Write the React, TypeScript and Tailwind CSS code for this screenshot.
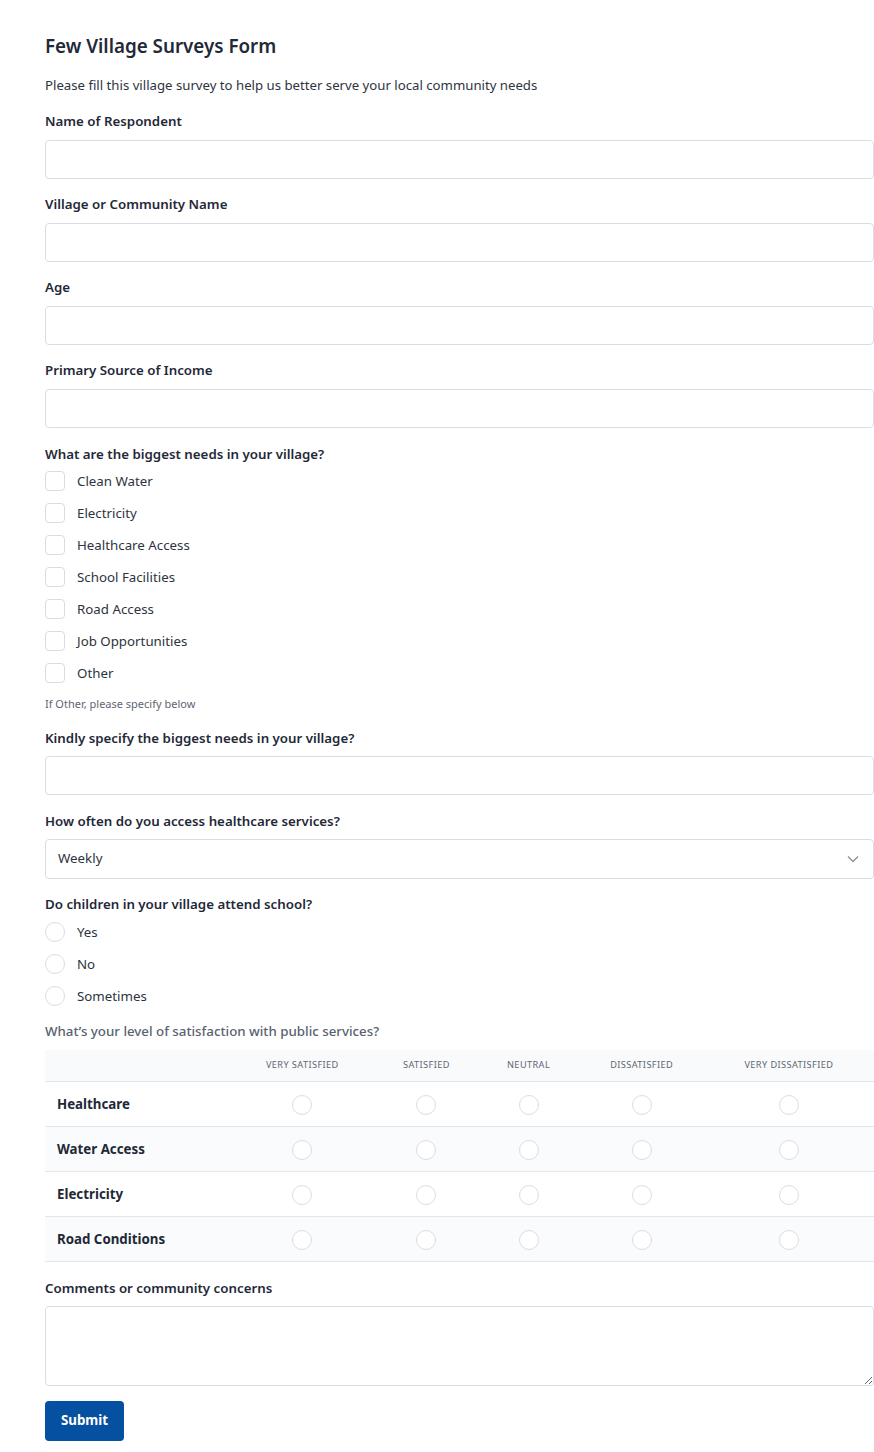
import React from "react";

const font = { fontFamily: '"Noto Sans", "Open Sans", sans-serif' };

function Label({ children }: { children: React.ReactNode }) {
  return <div className="text-[13.3px] leading-[20px] font-semibold text-[#1f2937]">{children}</div>;
}

function TextField({ label, gap = "mt-[9px]" }: { label: string; gap?: string }) {
  return (
    <div className="flex flex-col">
      <Label>{label}</Label>
      <input className={`${gap} block h-[39px] w-full rounded-[4px] border border-[#d9dde3] bg-white px-3 text-[14px] outline-none`} />
    </div>
  );
}

function Check({ label }: { label: string }) {
  return (
    <label className="flex items-center gap-[12px] h-[20px]">
      <span className="block h-[20px] w-[20px] rounded-[4px] border border-[#d9dde3] bg-white" />
      <span className="text-[13.3px] leading-[20px] text-[#2d3440]">{label}</span>
    </label>
  );
}

function Radio({ label }: { label?: string }) {
  return (
    <label className="flex items-center gap-[12px] h-[20px]">
      <span className="block h-[20px] w-[20px] rounded-full border border-[#d9dde3] bg-white" />
      {label && <span className="text-[13.3px] leading-[20px] text-[#2d3440]">{label}</span>}
    </label>
  );
}

function Circle() {
  return <span className="block h-[20px] w-[20px] rounded-full border border-[#d9dde3] bg-white" />;
}

export default function App() {
  const cols = ["Very Satisfied", "Satisfied", "Neutral", "Dissatisfied", "Very Dissatisfied"];
  const widths = ["w-[146px]", "w-[102px]", "w-[102px]", "w-[124px]", "w-[170px]"];
  const rows = ["Healthcare", "Water Access", "Electricity", "Road Conditions"];
  return (
    <div className="min-h-[1452px] bg-white text-[#1f2937]" style={font}>
      <div className="ml-[45px] w-[829px] pt-[32px] pb-[12px] flex flex-col">
        <h1 className="text-[18.8px] leading-[28px] font-semibold text-[#1f2937]">Few Village Surveys Form</h1>
        <p className="mt-[15px] text-[13.2px] leading-[20px] text-[#2d3440]">
          Please fill this village survey to help us better serve your local community needs
        </p>
        <div className="mt-[16px] flex flex-col gap-[15px]">
          <TextField label="Name of Respondent" />
          <TextField label="Village or Community Name" />
          <TextField label="Age" />
          <TextField label="Primary Source of Income" />
        </div>
        <div className="mt-[16px]">
          <Label>What are the biggest needs in your village?</Label>
          <div className="mt-[7px] flex flex-col gap-[12px]">
            {["Clean Water", "Electricity", "Healthcare Access", "School Facilities", "Road Access", "Job Opportunities", "Other"].map((c) => (
              <Check key={c} label={c} />
            ))}
          </div>
          <div className="mt-[13px] text-[11px] leading-[16px] text-[#5f6673]">If Other, please specify below</div>
        </div>
        <div className="mt-[16px]">
          <TextField label="Kindly specify the biggest needs in your village?" gap="mt-[8px]" />
        </div>
        <div className="mt-[16px] flex flex-col">
          <Label>How often do you access healthcare services?</Label>
          <div className="mt-[8px] h-[40px] w-full rounded-[4px] border border-[#d9dde3] bg-white pl-[12px] pr-[14px] flex items-center justify-between">
            <span className="text-[13.3px] text-[#2d3440]">Weekly</span>
            <svg width="12" height="8" viewBox="0 0 12 8" fill="none">
              <path d="M1 1.5L6 6.5L11 1.5" stroke="#8a909a" strokeWidth="1.3" />
            </svg>
          </div>
        </div>
        <div className="mt-[15px]">
          <Label>Do children in your village attend school?</Label>
          <div className="mt-[8px] flex flex-col gap-[12px]">
            <Radio label="Yes" />
            <Radio label="No" />
            <Radio label="Sometimes" />
          </div>
        </div>
        <div className="mt-[15px]">
          <div className="text-[13.3px] leading-[20px] font-medium text-[#5a6270]">What’s your level of satisfaction with public services?</div>
          <table className="mt-[9px] w-[829px] border-collapse table-fixed">
            <thead>
              <tr className="bg-[#f9fafb] border-b border-[#e3e6ea] h-[31px]">
                <th className="w-[184px]" />
                {cols.map((c, i) => (
                  <th key={c} className={`${widths[i]} text-center text-[9.2px] leading-[12px] font-normal uppercase tracking-[0.4px] text-[#5f6673]`}>
                    {c}
                  </th>
                ))}
              </tr>
            </thead>
            <tbody>
              {rows.map((r, ri) => (
                <tr key={r} className={`h-[45px] border-b border-[#e3e6ea] ${ri % 2 === 1 ? "bg-[#fafbfc]" : "bg-white"}`}>
                  <td className="pl-[12px] pt-[2px] text-[13.3px] font-bold text-[#1f2937]">{r}</td>
                  {cols.map((c) => (
                    <td key={c} className="text-center align-middle pt-[2px]">
                      <div className="flex justify-center"><Circle /></div>
                    </td>
                  ))}
                </tr>
              ))}
            </tbody>
          </table>
        </div>
        <div className="mt-[16px] flex flex-col">
          <Label>Comments or community concerns</Label>
          <textarea className="mt-[8px] block h-[80px] w-full rounded-[4px] border border-[#d9dde3] bg-white p-2 text-[14px] outline-none" />
        </div>
        <div className="mt-[15px]">
          <button className="block h-[40px] w-[79px] rounded-[4px] bg-[#0550a0] text-[13.3px] font-bold text-white">Submit</button>
        </div>
      </div>
    </div>
  );
}
